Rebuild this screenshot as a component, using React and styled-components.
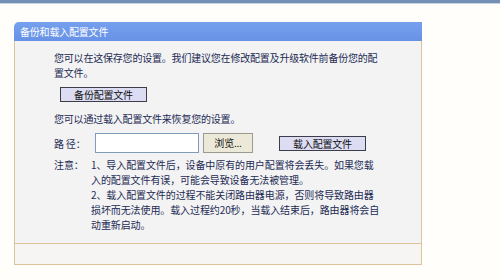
import React from "react";
import styled, { createGlobalStyle } from "styled-components";

const Global = createGlobalStyle`
  html, body { margin: 0; padding: 0; background: #ffffff; }
  body {
    font-family: "Noto Sans CJK SC", "Liberation Sans", sans-serif;
    font-size: 10px;
    color: #1d2b55;
  }
`;

const Page = styled.div`
  width: 500px;
  height: 279px;
  background: #fffefb;
  overflow: hidden;
`;

const TopBar = styled.div`
  height: 3px;
  background: #7390b4;
  border-bottom: 1px solid #c8d4e4;
`;

const Wrap = styled.div`
  padding: 18px 0 0 14px;
`;

const Panel = styled.section`
  width: 408px;
`;

const Header = styled.div`
  height: 19px;
  line-height: 19px;
  padding-left: 6px;
  color: #ffffff;
  background: linear-gradient(#76a0ee, #6792e6);
  border-radius: 5px 0 0 0;
  letter-spacing: -0.2px;
`;

const Body = styled.div`
  background: #f3f3f3;
  border-left: 1px solid #dcc39c;
  border-right: 1px solid #dcc39c;
  padding: 9px 0 11px 39px;
  line-height: 15px;
`;

const Para = styled.p`
  margin: ${(p) => p.$mt || 0}px 0 0 0;
  letter-spacing: -0.2px;
`;

const Button = styled.button`
  font-family: inherit;
  font-size: 10px;
  color: #111;
  padding: 0;
  margin: ${(p) => p.$mt || 0}px 0 0 ${(p) => p.$ml || 0}px;
  width: ${(p) => p.$w}px;
  height: ${(p) => p.$h}px;
  line-height: ${(p) => p.$h - 2}px;
  background: ${(p) => (p.$light ? "#ece9d8" : "#dcdcf2")};
  border: 1px solid ${(p) => (p.$light ? "#9c9a90" : "#3d3d4a")};
  display: block;
  flex: none;
  letter-spacing: -0.2px;
`;

const PathRow = styled.div`
  display: flex;
  align-items: center;
  height: 20px;
  margin-top: 7px;
`;

const Label = styled.span`
  width: 41px;
  flex: none;
  letter-spacing: -0.2px;
`;

const Input = styled.input`
  width: 104px;
  height: 20px;
  box-sizing: border-box;
  border: 1px solid #7f9db9;
  background: #fff;
  margin: 0;
  padding: 0;
  flex: none;
`;

const Notes = styled.div`
  display: grid;
  grid-template-columns: 37px 1fr;
  margin-top: 4px;
  letter-spacing: -0.1px;
`;

const Footer = styled.div`
  height: 20px;
  background: #f7f5f3;
  border: 1px solid #dcc39c;
`;

export default function App() {
  return (
    <Page>
      <Global />
      <TopBar />
      <Wrap>
        <Panel>
          <Header>备份和载入配置文件</Header>
          <Body>
            <Para>
              您可以在这保存您的设置。我们建议您在修改配置及升级软件前备份您的配
              <br />
              置文件。
            </Para>
            <Button $mt={7} $ml={6} $w={87} $h={15}>备份配置文件</Button>
            <Para $mt={9}>您可以通过载入配置文件来恢复您的设置。</Para>
            <PathRow>
              <Label>路 径：</Label>
              <Input type="text" />
              <Button $ml={4} $w={50} $h={20} $light>浏览...</Button>
              <Button $ml={26} $w={87} $h={15}>载入配置文件</Button>
            </PathRow>
            <Notes>
              <span>注意：</span>
              <div>
                1、导入配置文件后，设备中原有的用户配置将会丢失。如果您载
                <br />
                入的配置文件有误，可能会导致设备无法被管理。
                <br />
                2、载入配置文件的过程不能关闭路由器电源，否则将导致路由器
                <br />
                损坏而无法使用。载入过程约20秒，当载入结束后，路由器将会自
                <br />
                动重新启动。
              </div>
            </Notes>
          </Body>
          <Footer />
        </Panel>
      </Wrap>
    </Page>
  );
}
